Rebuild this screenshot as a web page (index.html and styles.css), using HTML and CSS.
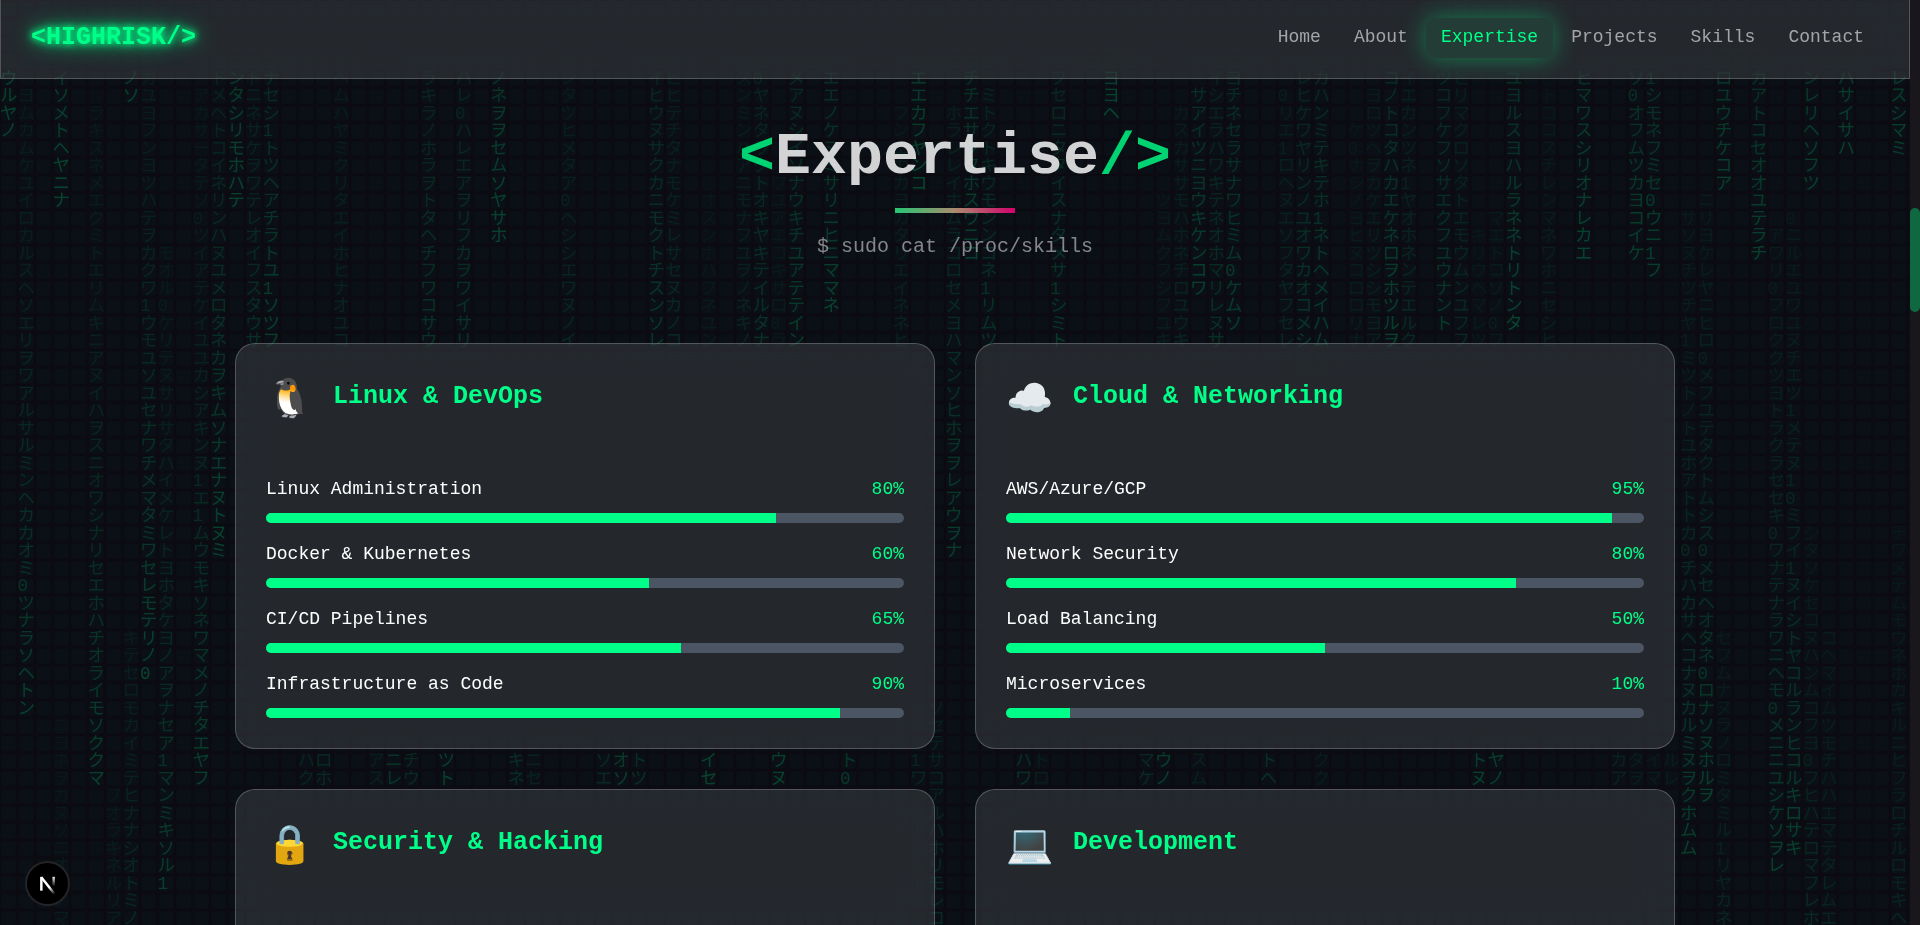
FILE: index.html
```html
<!DOCTYPE html>
<html lang="en">
<head>
<meta charset="utf-8">
<meta name="viewport" content="width=device-width, initial-scale=1">
<title>HIGHRISK - Expertise</title>
<link rel="stylesheet" href="styles.css">
</head>
<body>
<svg class="rain" viewBox="0 0 1528 740" preserveAspectRatio="xMinYMin slice" aria-hidden="true">
  <defs>
    <pattern id="cell" width="14" height="14" patternUnits="userSpaceOnUse">
      <rect x="1" y="1" width="12" height="12" rx="3" class="rain-cell"/>
    </pattern>
  </defs>
  <rect width="1528" height="2000" fill="url(#cell)"/>
  <g id="rain-text" class="rain-text"></g>
</svg>

<div class="page">
  <nav class="nav">
    <a class="logo" href="#home">&lt;HIGHRISK/&gt;</a>
    <ul class="nav-links">
      <li><a href="#home">Home</a></li>
      <li><a href="#about">About</a></li>
      <li><a class="active" href="#expertise">Expertise</a></li>
      <li><a href="#projects">Projects</a></li>
      <li><a href="#skills">Skills</a></li>
      <li><a href="#contact">Contact</a></li>
    </ul>
  </nav>

  <main class="section" id="expertise">
    <header class="section-head">
      <h1><span class="accent">&lt;</span>Expertise<span class="accent">/&gt;</span></h1>
      <div class="rule"></div>
      <p>$ sudo cat /proc/skills</p>
    </header>

    <div class="cards">
      <article class="card">
        <header class="card-head"><span class="emoji">🐧</span><h2>Linux &amp; DevOps</h2></header>
        <div class="skills">
          <div class="skill"><label for="s1">Linux Administration</label><span class="pct">80%</span><progress id="s1" max="100" value="80"></progress></div>
          <div class="skill"><label for="s2">Docker &amp; Kubernetes</label><span class="pct">60%</span><progress id="s2" max="100" value="60"></progress></div>
          <div class="skill"><label for="s3">CI/CD Pipelines</label><span class="pct">65%</span><progress id="s3" max="100" value="65"></progress></div>
          <div class="skill"><label for="s4">Infrastructure as Code</label><span class="pct">90%</span><progress id="s4" max="100" value="90"></progress></div>
        </div>
      </article>

      <article class="card">
        <header class="card-head"><span class="emoji">☁️</span><h2>Cloud &amp; Networking</h2></header>
        <div class="skills">
          <div class="skill"><label for="s5">AWS/Azure/GCP</label><span class="pct">95%</span><progress id="s5" max="100" value="95"></progress></div>
          <div class="skill"><label for="s6">Network Security</label><span class="pct">80%</span><progress id="s6" max="100" value="80"></progress></div>
          <div class="skill"><label for="s7">Load Balancing</label><span class="pct">50%</span><progress id="s7" max="100" value="50"></progress></div>
          <div class="skill"><label for="s8">Microservices</label><span class="pct">10%</span><progress id="s8" max="100" value="10"></progress></div>
        </div>
      </article>

      <article class="card tall">
        <header class="card-head"><span class="emoji">🔒</span><h2>Security &amp; Hacking</h2></header>
      </article>

      <article class="card tall">
        <header class="card-head"><span class="emoji">💻</span><h2>Development</h2></header>
      </article>
    </div>
  </main>
</div>

<div class="scroll-track"><div class="scroll-thumb"></div></div>

<button class="dev-badge" type="button" aria-label="Open developer tools">
  <svg viewBox="0 0 40 40" aria-hidden="true">
    <defs>
      <linearGradient id="n-diag" x1="24" y1="22" x2="29" y2="29" gradientUnits="userSpaceOnUse"><stop stop-color="#fff"/><stop offset="1" stop-color="#fff" stop-opacity="0"/></linearGradient>
      <linearGradient id="n-stem" x1="26" y1="13" x2="26" y2="23" gradientUnits="userSpaceOnUse"><stop stop-color="#fff"/><stop offset="1" stop-color="#fff" stop-opacity="0"/></linearGradient>
    </defs>
    <path d="M14 14L27 30.500" fill="none" stroke="url(#n-diag)" stroke-width="2.400"/>
    <path d="M14 27V13.500" fill="none" stroke="#fff" stroke-width="2.400"/>
    <path d="M26 13.500V23" fill="none" stroke="url(#n-stem)" stroke-width="2.400"/>
  </svg>
</button>
<script src="rain.js"></script>
</body>
</html>
```

FILE: styles.css
```css
* {
  box-sizing: border-box;
  margin: 0;
  padding: 0;
}

:root {
  --green: #00ff88;
  --bg: #0c0b11;
  --glass: rgba(255, 255, 255, 0.11);
  --edge: rgba(255, 255, 255, 0.22);
}

body {
  display: grid;
  grid-template-columns: 1fr 10px;
  height: 100vh;
  overflow: hidden;
  background: var(--bg);
  color: #fff;
  font-family: "Liberation Mono", "Noto Sans CJK JP", monospace;
}

.rain {
  position: fixed;
  inset: 0 10px 0 0;
  width: calc(100% - 10px);
  height: 100%;
  z-index: -1;
}

.rain-cell {
  fill: #0a1016;
}

.rain-text {
  fill: var(--green);
  font-size: 14px;
}

.page {
  min-width: 0;
  height: 100vh;
  overflow: hidden;
}

.nav {
  display: flex;
  align-items: center;
  justify-content: space-between;
  padding: 18px 30px 20px;
  border: 1px solid var(--edge);
  border-top: 0;
  background: var(--glass);
  backdrop-filter: blur(20px);
}

.logo {
  color: var(--green);
  font-size: 25px;
  font-weight: 700;
  line-height: 40px;
  text-decoration: none;
  text-shadow: 0 0 6px var(--green), 0 0 12px var(--green), 0 0 25px var(--green);
}

.nav-links {
  display: flex;
  gap: 3px;
  list-style: none;
}

.nav-links a {
  display: block;
  padding: 7px 15px 8px;
  border-radius: 10px;
  color: #a3a5a8;
  font-size: 18px;
  line-height: 25px;
  text-decoration: none;
}

.nav-links .active {
  background: #233c35;
  color: var(--green);
  box-shadow: 0 0 25px rgba(0, 255, 136, 0.4);
}

.section {
  padding: 48px 30px;
}

.section-head {
  display: flex;
  flex-direction: column;
  align-items: center;
  margin-bottom: 81px;
  opacity: 0.82;
}

.section-head h1 {
  font-size: 60px;
  line-height: 60px;
}

.accent {
  color: var(--green);
}

.rule {
  width: 120px;
  height: 5px;
  margin: 21px 0 19px;
  background: linear-gradient(90deg, #2bf08c, #cfa883 50%, #ff0080);
}

.section-head p {
  color: #a0a2a6;
  font-size: 20px;
  line-height: 30px;
}

.cards {
  display: grid;
  grid-template-columns: 1fr 1fr;
  gap: 40px;
  max-width: 1440px;
  margin: 0 auto;
}

.card {
  padding: 30px;
  border: 1px solid var(--edge);
  border-radius: 20px;
  background: var(--glass);
  backdrop-filter: blur(20px);
}

.tall {
  min-height: 406px;
}

.card-head {
  display: flex;
  align-items: flex-start;
  gap: 20px;
  margin-bottom: 50px;
}

.emoji {
  font-size: 38px;
  line-height: 53px;
}

.card-head h2 {
  color: var(--green);
  font-size: 25px;
  line-height: 45px;
}

.skills {
  display: grid;
  gap: 19px;
}

.skill {
  display: grid;
  grid-template-columns: 1fr auto;
  row-gap: 11px;
  font-size: 18px;
  line-height: 25px;
}

.pct {
  color: var(--green);
}

.skill progress {
  grid-column: 1 / -1;
  display: block;
  width: 100%;
  height: 10px;
  border: 0;
  border-radius: 5px;
  overflow: hidden;
  appearance: none;
  background: #4b5563;
}

.skill progress::-webkit-progress-bar {
  background: #4b5563;
}

.skill progress::-webkit-progress-value {
  background: var(--green);
}

.scroll-track {
  display: flex;
  flex-direction: column;
  background: #19171c;
}

.scroll-thumb {
  height: 104px;
  margin-top: 208px;
  border-radius: 5px;
  background: #0f6840;
}

.dev-badge {
  position: fixed;
  left: 25px;
  bottom: 19px;
  width: 45px;
  height: 45px;
  border: 2px solid #242426;
  border-radius: 50%;
  background: #000;
}

.dev-badge svg {
  display: block;
  width: 100%;
  height: 100%;
}
```

FILE: rain.js
```js
// Each stream: column, first row, opacity of the last glyph, glyphs from top to bottom.
const streams = [
  [0, 4, 22, "ウルヤノ"], [1, 5, 20, "ヨムカムケユイロカルスヘソエリヲワアルサルミンヘカカオミ0ツナラソヘトン"],
  [3, 4, 22, "イソメトヘヤニナ"], [3, 41, 5, "ニヨネヲカヌソニオエノマ"],
  [5, 6, 20, "ラキスネメエクミトエリムキニアヌイハヲスニオワシナリセエホハチオライモソククマ"],
  [6, 45, 6, "フオラキネルリア"], [7, 4, 20, "ノソ"], [7, 36, 11, "キテセロモカイミテヒナナシオトミノ"],
  [8, 4, 22, "カユヨフンヨツハテヲカクワ1ウモユソユセナワチメマタミワセレモテリノ0"],
  [9, 14, 19, "モオル0ケリテヌサリサタハイメケレトヨホタケヨノアヲナセア1マンミキソル1"],
  [11, 5, 20, "アカサータテソ0ツイアテケイユユカシアキンヌ1エ1ムウモキソネワマメノチタエヤフ"],
  [12, 4, 22, "トメヘトコイネリンハヌユメロタネカヲキムソナエナヌトヌミ"],
  [13, 4, 22, "ンタシリモホハテ"], [14, 4, 13, "トニネサケヲワテレオイフスタウサ"],
  [15, 4, 20, "ナセシ1トツヘアチラトユ1ソツフ"], [19, 4, 9, "ヘムハヤミクリタエイホヒナオユコ"],
  [24, 4, 15, "ラキラノホラヲトタヘチフワコサウ"], [26, 4, 15, "ハレ0ハレエアヲリフカヲワイサリ"],
  [28, 4, 22, "ノネヲヲセムソヤサホ"], [32, 4, 10, "ンタツヒメタア0ヘシシエワヌノイ"],
  [37, 4, 17, "イヒウヌサクカニモクトチスンソレ"], [38, 4, 11, "ヒヒテチタナモケミレサセヌカノコ"],
  [40, 11, 5, "オスンホハフネユン"], [42, 4, 9, "スンミンハアニモナフユヲノネキノ"],
  [43, 4, 15, "0ヤネタラクトオキヤキテイルタナ"], [44, 10, 5, "ワユアエコキサロ0ラ"],
  [45, 4, 19, "メアヌシイソナウキチユアテテイン"], [47, 4, 21, "エエノケヌミサリニヒニママネ"],
  [51, 6, 8, "フンエカカヨカタリエイネネヒ"], [52, 4, 22, "エエカフヤンコ"],
  [54, 6, 19, "ホラレレイホムラコロセメヨハマンソヒホヲヲレアウヲナ"],
  [55, 4, 20, "チチエサツタホスウニコ"], [56, 5, 15, "ミトクトキウモンンコネ1リムツ"],
  [60, 4, 17, "フセロニタタイスナタメサ1シミト"], [63, 4, 22, "ヨヨヘ"],
  [66, 11, 6, "ツヨムクフシフユキ"], [67, 6, 9, "カスカササモハホネチロユウキ"],
  [68, 5, 20, "サアイツニヨウキケンコワ"], [69, 4, 14, "イシエラハワキテネオホマリレヌサ"],
  [70, 4, 19, "ヨチネセラサナワヒミム0ケムソ"],
  [73, 5, 10, "0リエ1ロヘヌエソフタヤフセレ"], [74, 4, 16, "レヒケワヤリンノユオワカオコメシ"],
  [75, 4, 19, "カハンミテキテホ1ネトヘメイハム"], [77, 7, 6, "ケ0ナシノヨヒヌコロロリナ"],
  [78, 5, 8, "ヨロツヘヲカケエリツシシモヨア"], [79, 4, 21, "コノトコタハカエケネロヲホツルヲ"],
  [80, 4, 11, "イエカンツネ1ヤオホネンテエルク"], [82, 4, 17, "ツコフケフソサエクフユウナント"],
  [83, 4, 11, "ヒリマクロソタトエモウムンユフフ"], [84, 13, 5, "キリウヘマレツ"],
  [85, 12, 6, "マエトコソノ0フ"], [86, 4, 22, "ユヨルスヨハルラネネトリトンタ"],
  [88, 5, 7, "トココスチレンマネワホニセシヒ"], [90, 4, 22, "ヒマワスシリオナレカエ"],
  [93, 4, 19, "ソ0オフムツカヨコイケ"], [94, 4, 20, "1シモネフミセ0ウニ1フ"],
  [96, 12, 20, "サソヌチツチヤ1ミツトノトユホアトトカ0チハカサヘコナヌカルミヌヲクホムム"],
  [97, 11, 20, "ニリヨケレヤニヒロ0メフユテタクトムシス0メセヘオタネ0ロナソヌホルヲ"],
  [98, 4, 20, "ロユウチケコア"], [98, 36, 9, "セフムナヌラノロミタミル1リヤカネ"],
  [100, 4, 20, "カアトコセオオユテラチ"],
  [101, 13, 20, "アワリ0フロククツヨトラクラセセキ0ワナテナラワニヘモ0メニニユシケソヲレ"],
  [102, 12, 20, "0ニルエユワユヌチエツ1メテヌ10ミフイ1ヌイシトヤコルランヒコルキロサキ"],
  [103, 4, 20, "ンレリヘソフツ"], [103, 30, 11, "シタソケセコヌハンムコフヨ0フヒハテロマフレホ"],
  [104, 36, 9, "コヘマイムツモチハハエマテタレムエ"], [105, 4, 20, "ハサイサハ"],
  [108, 4, 20, "レスシマミ"], [108, 30, 9, "テワメテムモウネホカキルニヒフラロチルロモキヘ"],
  [17, 43, 9, "ハク"], [18, 43, 11, "ロホ"], [21, 43, 7, "アス"], [22, 43, 16, "ニレ"], [23, 43, 11, "チウ"],
  [25, 43, 20, "ツト"], [29, 43, 13, "キネ"], [30, 43, 8, "ニセ"], [34, 43, 11, "ソエ"], [35, 43, 18, "オソ"],
  [36, 43, 13, "トツ"], [40, 43, 22, "イセ"], [44, 43, 21, "ウヌ"], [48, 43, 17, "ト0"], [52, 43, 9, "1ワ"],
  [53, 40, 11, "ソセテサコアルハホリモレコ"], [58, 43, 14, "ハワ"], [59, 43, 6, "トロ"], [65, 43, 11, "マケ"],
  [66, 43, 20, "ウノ"], [68, 43, 7, "スム"], [72, 43, 13, "トヘ"], [75, 43, 6, "クク"], [84, 43, 20, "トヌ"],
  [85, 43, 20, "ヤノ"], [92, 43, 8, "カア"], [93, 43, 6, "タヲ"], [94, 43, 5, "イマ"], [95, 43, 6, "ルレ"]
];

const SVG = "http://www.w3.org/2000/svg";
const CELL = 14;
const FADE = 0.96;
const layer = document.getElementById("rain-text");

for (const [column, row, strength, glyphs] of streams) {
  const text = document.createElementNS(SVG, "text");
  [...glyphs].forEach((glyph, i) => {
    const span = document.createElementNS(SVG, "tspan");
    span.setAttribute("x", column * CELL);
    span.setAttribute("y", (row + i + 1) * CELL - 3);
    span.setAttribute("fill-opacity", (strength / 100) * FADE ** (glyphs.length - 1 - i));
    span.textContent = glyph;
    text.append(span);
  });
  layer.append(text);
}
```
